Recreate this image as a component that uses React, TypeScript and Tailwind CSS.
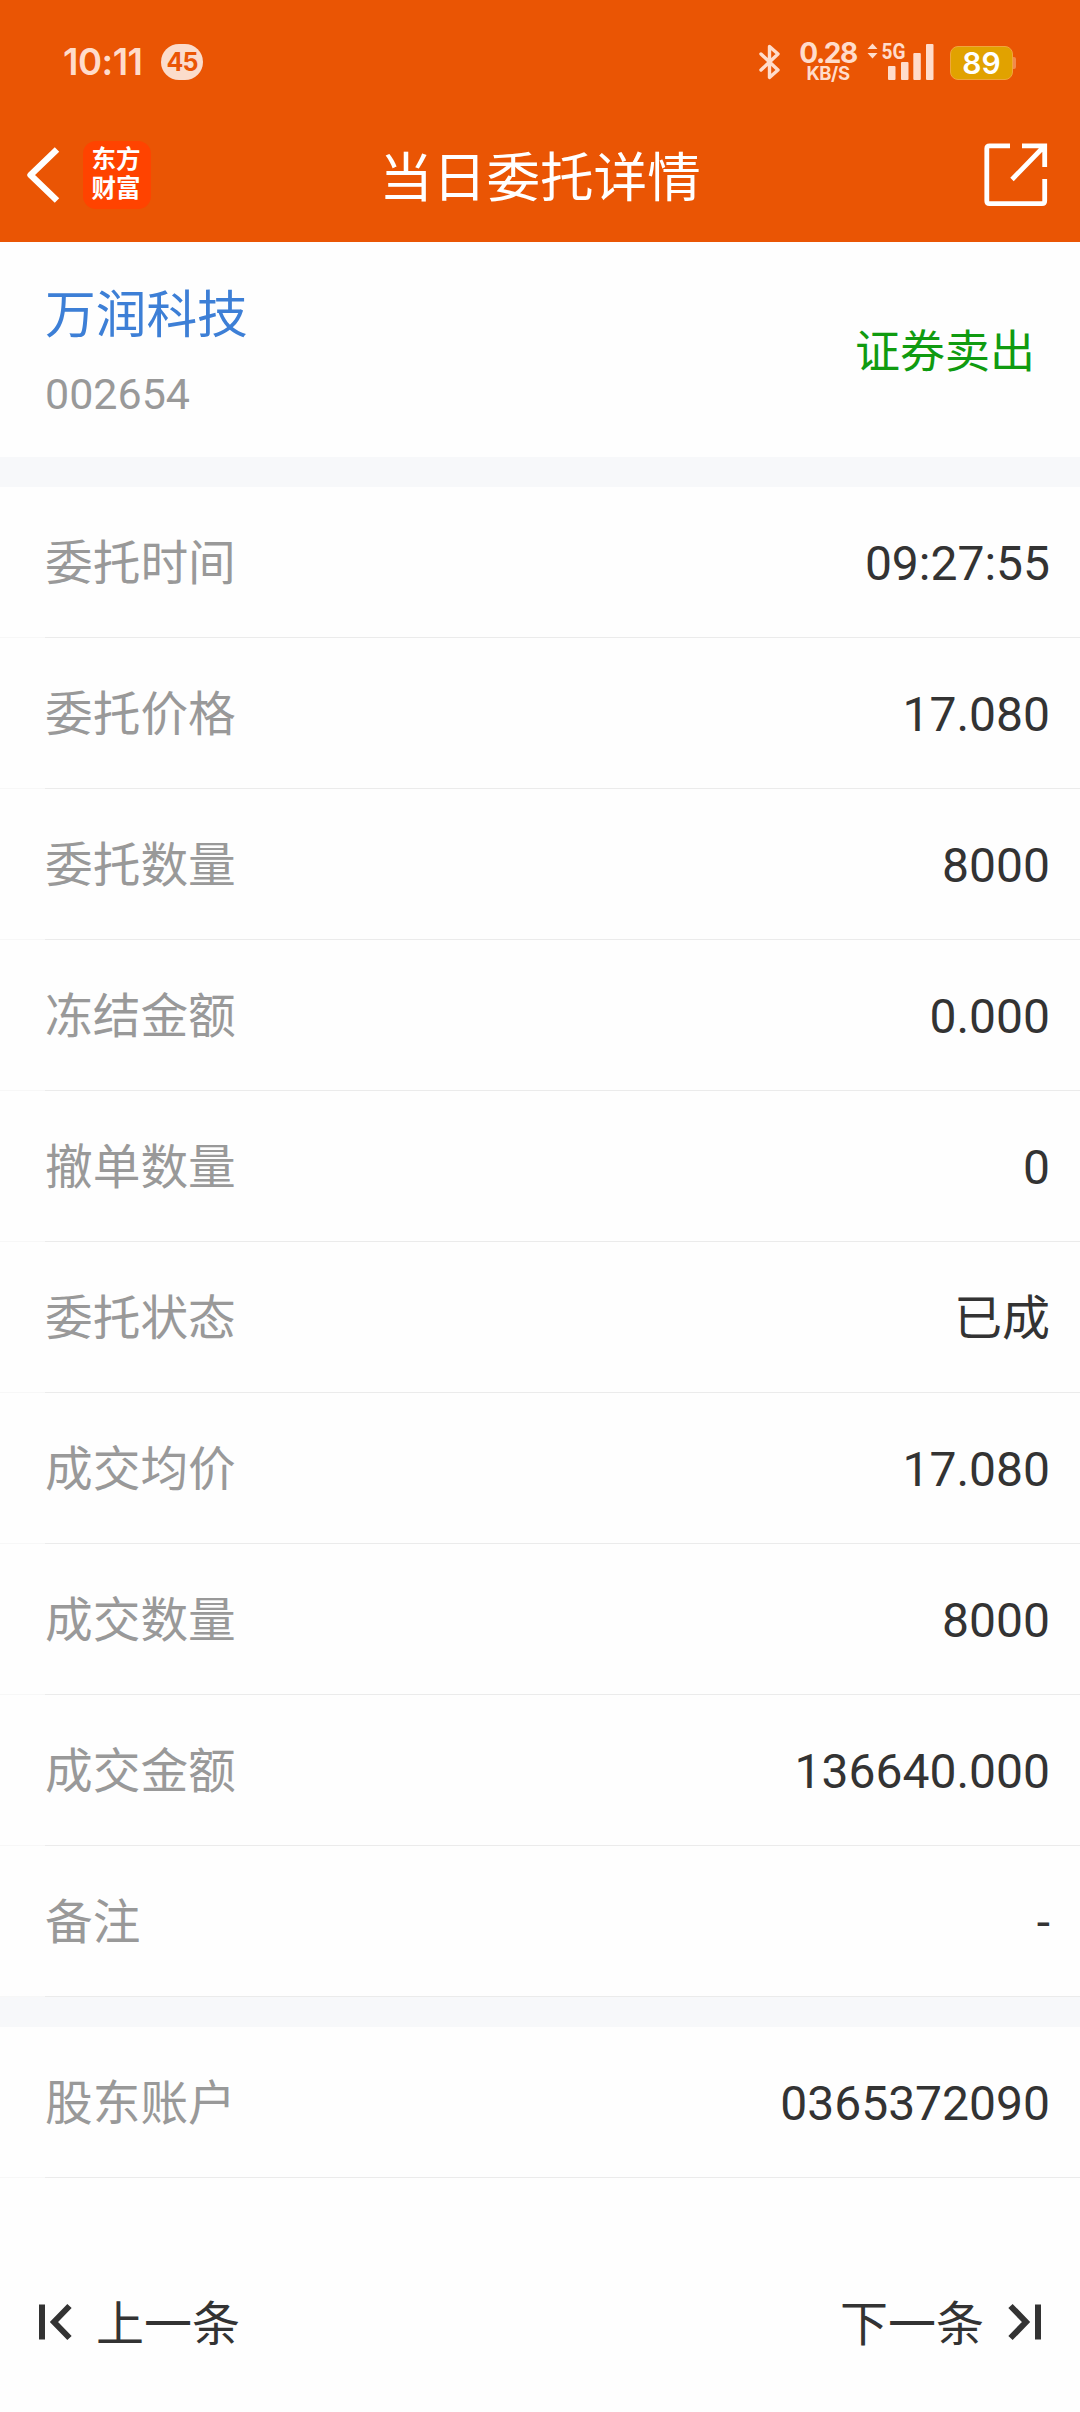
interface DetailItem {
  label: string;
  value: string;
}

const orderItems: DetailItem[] = [
  { label: "委托时间", value: "09:27:55" },
  { label: "委托价格", value: "17.080" },
  { label: "委托数量", value: "8000" },
  { label: "冻结金额", value: "0.000" },
  { label: "撤单数量", value: "0" },
  { label: "委托状态", value: "已成" },
  { label: "成交均价", value: "17.080" },
  { label: "成交数量", value: "8000" },
  { label: "成交金额", value: "136640.000" },
  { label: "备注", value: "-" },
];

const accountItems: DetailItem[] = [{ label: "股东账户", value: "0365372090" }];

function BluetoothIcon() {
  return (
    <svg className="w-[22px] h-[36px]" viewBox="0 0 22 36" fill="none" stroke="#ffdccb" strokeWidth="3.4">
      <path d="M2 10 L19 26 L10.5 33.5 V2.5 L19 10 L2 26" strokeLinejoin="round" strokeLinecap="round" />
    </svg>
  );
}

function SignalIcon() {
  return (
    <svg className="w-[67px] h-[38px] overflow-visible" viewBox="0 0 67 38" fill="#ffdccb">
      <path d="M5.5 0.5 L10.5 6 H0.5 Z M0.5 10 H10.5 L5.5 15.5 Z" strokeLinejoin="round" />
      <text
        x="14.5"
        y="16.3"
        fontSize="22"
        fontWeight="700"
        fontFamily="Roboto, sans-serif"
        textLength="24"
        lengthAdjust="spacingAndGlyphs"
      >
        5G
      </text>
      <rect x="21" y="23" width="7.5" height="14" rx="1" />
      <rect x="34" y="19" width="7.5" height="18" rx="1" />
      <rect x="46.3" y="10" width="7.5" height="27" rx="1" />
      <rect x="59" y="1" width="7.5" height="36" rx="1" />
    </svg>
  );
}

function StatusBar() {
  return (
    <div className="h-[107px] flex items-start justify-between pl-[63px] pr-[64px] pt-[43px] font-[Inter,sans-serif] text-[#ffdccb]">
      <div className="flex items-start">
        <span className="w-[98px] text-[36.5px] leading-[38px] font-semibold tracking-[-0.5px]">10:11</span>
        <span className="mt-px w-[42px] h-[36px] rounded-full bg-[#fbdccb] text-[#ea5504] text-[25px] leading-[36px] font-bold text-center tracking-[-1px]">
          45
        </span>
      </div>
      <div className="flex items-start">
        <div className="mt-px mr-[18px]">
          <BluetoothIcon />
        </div>
        <div className="w-[58px] mr-[10px] flex flex-col items-center">
          <span className="text-[28px] leading-[21px] font-bold tracking-[-1.5px]">0.28</span>
          <span className="mt-[2px] text-[18.5px] leading-[15px] font-bold tracking-[-0.4px]">KB/S</span>
        </div>
        <SignalIcon />
        <div className="ml-[16px] mt-[3px] flex items-center">
          <div className="w-[63px] h-[34px] rounded-[8px] border border-[#f0a63c] bg-[#e1a200] text-white text-[30px] leading-[33px] font-semibold text-center">
            89
          </div>
          <div className="w-[3px] h-[12px] rounded-r-[2px] bg-[#f18a4c]" />
        </div>
      </div>
    </div>
  );
}

function NavBar() {
  return (
    <div className="h-[135px] flex items-center justify-between pl-[26px] pr-[32px]">
      <div className="w-[300px] flex items-center">
        <svg className="w-[34px] h-[58px]" viewBox="0 0 34 58" fill="none" stroke="white" strokeWidth="6.4">
          <path d="M31 3.5 L4.5 29 L31 54.5" strokeLinejoin="round" />
        </svg>
        <div className="ml-[23px] w-[68px] h-[68px] pr-[2px] pb-[2px] rounded-[13px] bg-[#ff4300] flex flex-col items-center justify-center text-white text-[24.5px] leading-[29px] font-bold">
          <span>东方</span>
          <span>财富</span>
        </div>
      </div>
      <h1 className="pt-[8px] text-[53.6px] leading-[64px] text-white">当日委托详情</h1>
      <div className="w-[294px] flex justify-end">
        <svg className="w-[64px] h-[64px]" viewBox="0 0 64 64" fill="none" stroke="white" strokeWidth="4.8">
          <path d="M26 2.8 H5.5 Q2.8 2.8 2.8 5.5 V58 Q2.8 60.7 5.5 60.7 H58 Q60.7 60.7 60.7 58 V36" />
          <path d="M38 2.8 H60.7 V24 M60 3.5 L28 36.5" />
        </svg>
      </div>
    </div>
  );
}

function DetailRow({ label, value }: DetailItem) {
  return (
    <div>
      <div className="h-[150px] pl-[45px] pr-[30px] flex items-center justify-between text-[48px]">
        <span className="pt-[5px] text-[47.7px] text-[#999999]">{label}</span>
        <span className="pt-[4px] text-[#333333]">{value}</span>
      </div>
      <div className="h-px flex">
        <div className="w-[45px] bg-[#f7f7f7]" />
        <div className="flex-1 bg-[#ebebeb]" />
      </div>
    </div>
  );
}

export default function App() {
  return (
    <div className="w-[1080px] h-[2412px] overflow-hidden flex flex-col bg-[#fefefe] font-[Roboto,'Noto_Sans_CJK_SC',sans-serif]">
      <header className="bg-[#ea5504]">
        <StatusBar />
        <NavBar />
      </header>

      <section className="h-[215px] px-[45px] flex items-center justify-between">
        <div className="pt-[7px] flex flex-col">
          <span className="text-[50.7px] leading-[68px] text-[#3d7fd6]">万润科技</span>
          <span className="mt-[14px] text-[43px] leading-[60px] text-[#999999]">002654</span>
        </div>
        <span className="pt-[6px] text-[45px] text-[#109b10]">证券卖出</span>
      </section>

      <div className="h-[30px] bg-[#f7f8fa]" />
      {orderItems.map((item) => (
        <DetailRow key={item.label} {...item} />
      ))}
      <div className="h-[30px] bg-[#f7f8fa]" />
      {accountItems.map((item) => (
        <DetailRow key={item.label} {...item} />
      ))}

      {/* Previous / next order */}
      <footer className="mt-auto h-[180px] px-[38px] flex items-center justify-between text-[48px] text-[#333333]">
        <button className="flex items-center">
          <svg className="w-[36px] h-[38px] mr-[22px]" viewBox="0 0 36 38" fill="none" stroke="#333333" strokeWidth="6">
            <path d="M4 1.5 V36.5 M31.5 3 L16 19 L31.5 35" />
          </svg>
          <span className="pt-[5px]">上一条</span>
        </button>
        <button className="flex items-center">
          <span className="pt-[5px]">下一条</span>
          <svg className="w-[36px] h-[38px] ml-[22px]" viewBox="0 0 36 38" fill="none" stroke="#333333" strokeWidth="6">
            <path d="M32 1.5 V36.5 M4.5 3 L20 19 L4.5 35" />
          </svg>
        </button>
      </footer>
    </div>
  );
}
